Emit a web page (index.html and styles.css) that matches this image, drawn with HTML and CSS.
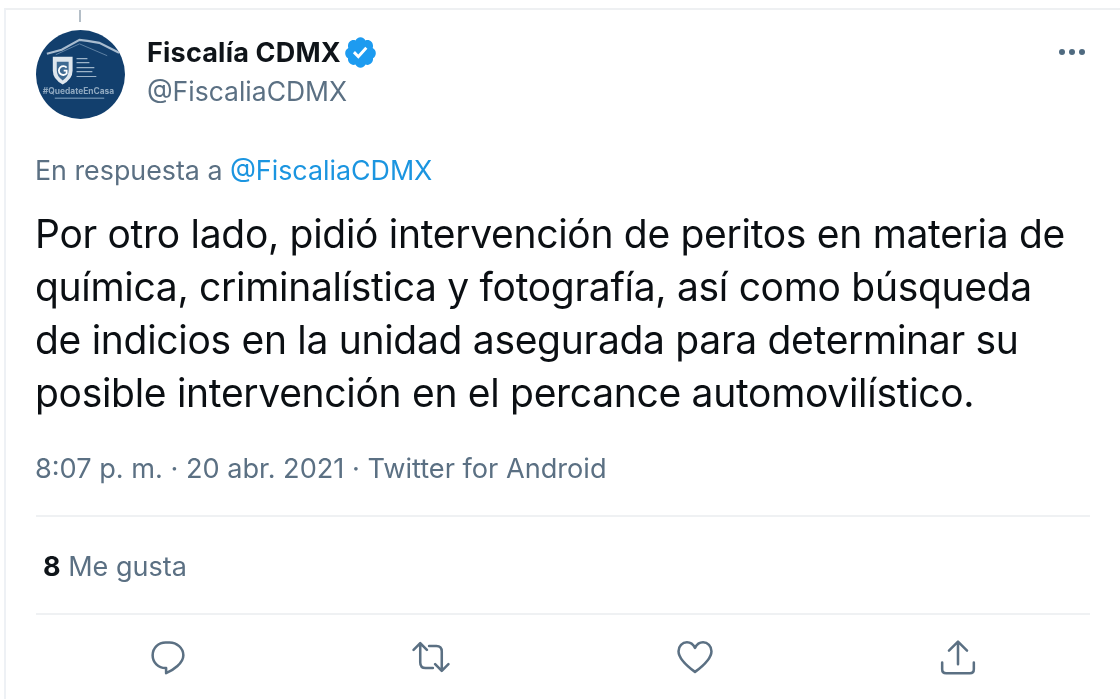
FILE: index.html
```
<!DOCTYPE html>
<html lang="es">
<head>
<meta charset="utf-8">
<title>Fiscalía CDMX</title>
<link rel="stylesheet" href="styles.css">
</head>
<body>
<main class="tweet">
  <div class="thread-line"></div>
  <header class="head">
    <svg class="avatar" viewBox="0 0 90 90" role="img" aria-label="Fiscalía CDMX">
      <circle cx="45" cy="45" r="45" fill="#123f6d"/>
      <path d="M11 24 L26 20 L44 10 L52 11 L64 13 L84 23" fill="none" stroke="#a9bccf" stroke-width="2.200"/>
      <path d="M20 25 L44 14 L72 26" fill="none" stroke="#5f82a4" stroke-width="1"/>
      <path d="M17 27h20v14q0 9-10 14q-10-5-10-14z" fill="#dfe7ee"/>
      <path d="M21 32h12v9q0 6-6 10q-6-4-6-10z" fill="#3f6a92"/>
      <path d="M31 38a4.500 4.500 0 1 0 0 6v-3h-3" fill="none" stroke="#fff" stroke-width="1.800"/>
      <g class="avatar-lines">
        <path d="M41 29h11M41 33h13M41 38h18M41 42h16M41 47h20"/>
      </g>
      <text class="avatar-tag" x="43" y="65" text-anchor="middle">#QuedateEnCasa</text>
      <path d="M19 69h50" stroke="#5f83a6" stroke-width="1.400"/>
    </svg>
    <div class="names">
      <div class="name-row">
        <span class="name">Fiscalía CDMX</span>
        <svg class="badge" viewBox="0 0 24 24" aria-hidden="true"><path fill="#1d9bf0" d="M22.500 12.500c0-1.580-.875-2.950-2.148-3.600.154-.435.238-.905.238-1.400 0-2.210-1.710-3.998-3.818-3.998-.47 0-.92.084-1.336.25C14.818 2.415 13.510 1.500 12 1.500s-2.816.917-3.437 2.250c-.415-.165-.866-.25-1.336-.25-2.110 0-3.818 1.790-3.818 4 0 .494.083.964.237 1.400-1.272.650-2.147 2.018-2.147 3.600 0 1.495.782 2.798 1.942 3.486-.02.170-.032.340-.032.514 0 2.210 1.708 4 3.818 4 .47 0 .92-.086 1.335-.25.620 1.334 1.926 2.250 3.437 2.250 1.512 0 2.818-.916 3.437-2.250.415.163.865.248 1.336.248 2.110 0 3.818-1.790 3.818-4 0-.174-.012-.344-.033-.513 1.158-.687 1.943-1.990 1.943-3.484z"/><path fill="#fff" d="M10.540 16.200 6.800 12.460l1.410-1.410 2.260 2.260 4.800-5.230 1.470 1.350z"/></svg>
      </div>
      <div class="handle">@FiscaliaCDMX</div>
    </div>
    <div class="more" aria-label="Más"><span></span><span></span><span></span></div>
  </header>
  <p class="reply">En respuesta a <a class="mention">@FiscaliaCDMX</a></p>
  <p class="text">Por otro lado, pidió intervención de peritos en materia de<br>química, criminalística y fotografía, así como búsqueda<br>de indicios en la unidad asegurada para determinar su<br>posible intervención en el percance automovilístico.</p>
  <p class="meta">8:07 p. m. · 20 abr. 2021 · Twitter for Android</p>
  <div class="likes"><b>8</b> Me gusta</div>
  <nav class="actions">
    <svg class="icon" viewBox="0 0 24 24"><path d="M12.500 2.800h-2C5.900 2.800 2.300 6.300 2.300 10.900c0 4.500 3.600 8.100 8.100 8.100h.4v3.200c4.600-2 10.900-6.300 10.900-11.300 0-4.600-4.200-8.100-8.700-8.100z"/></svg>
    <svg class="icon" viewBox="0 0 24 24"><path d="M1 7.500 5.200 3.200 9.400 7.500M5.200 3.600V15.500c0 2.200 1.400 3.500 3.400 3.500h4.600M23 16.500l-4.200 4.300-4.200-4.300M18.800 20.400V8.500c0-2.200-1.400-3.500-3.400-3.500h-4.600"/></svg>
    <svg class="icon" viewBox="0 0 24 24"><path d="M12 21.400C7.400 18 1.600 13.400 1.600 8.300c0-3.200 2.400-5.600 5.300-5.600 2.300 0 4 1.300 5.100 3.600 1.100-2.300 2.800-3.600 5.100-3.600 2.900 0 5.300 2.400 5.300 5.600 0 5.100-5.800 9.700-10.400 13.100z"/></svg>
    <svg class="icon" viewBox="0 0 24 24"><path d="M12 16.500V2.500M6.300 8 12 2.300 17.700 8M2 15.500v4.200c0 1.500 1 2.500 2.500 2.500h15c1.500 0 2.500-1 2.500-2.500v-4.200"/></svg>
  </nav>
</main>
</body>
</html>
```
FILE: styles.css
```
html, body {
  margin: 0;
  padding: 0;
  background: #fff;
}
body {
  width: 1120px;
  height: 699px;
  overflow: hidden;
  padding: 8px 0 0 4px;
  box-sizing: border-box;
  font-family: Inter, "Liberation Sans", sans-serif;
  color: #0f1419;
}
.tweet {
  height: 691px;
  border-top: 2px solid #eef0f2;
  border-left: 2px solid #eef1f5;
  padding: 0 30px;
  box-sizing: border-box;
  filter: blur(0.5px);
}
.thread-line {
  width: 2px;
  height: 12px;
  background: #b4bec7;
  margin-left: 43px;
}
.head {
  display: flex;
  align-items: flex-start;
  margin-top: 8px;
}
.avatar {
  width: 89px;
  height: 89px;
  flex: none;
}
.avatar-lines {
  stroke: #9db4c9;
  stroke-width: 1.2;
}
.avatar-tag {
  font-size: 8.500px;
  font-weight: 700;
  fill: #8fa8bf;
}
.names {
  margin-left: 22px;
  flex: 1;
  padding-top: 6px;
}
.name-row {
  display: flex;
  align-items: center;
  gap: 2px;
  height: 32px;
}
.name {
  font-size: 27px;
  font-weight: 700;
  letter-spacing: 0.2px;
}
.badge {
  width: 35px;
  height: 35px;
}
.handle {
  font-size: 26.5px;
  color: #5b7083;
  margin-top: 7px;
}
.more {
  display: flex;
  gap: 4px;
  margin: 19px 5px 0 0;
}
.more span {
  width: 6px;
  height: 6px;
  border-radius: 50%;
  background: #4f6a80;
}
.reply {
  margin: 33px 0 0 -1px;
  font-size: 26.8px;
  line-height: 36px;
  color: #5b7083;
}
.mention {
  color: #1b95e0;
}
.text {
  margin: 19px 0 0 -1px;
  font-size: 39px;
  line-height: 53px;
  letter-spacing: -0.3px;
  color: #0b0f13;
}
.meta {
  margin: 32px 0 0 -1px;
  font-size: 27.15px;
  line-height: 36px;
  color: #5b7083;
}
.likes {
  margin-top: 28px;
  border-top: 2px solid #eff1f3;
  border-bottom: 2px solid #eff1f3;
  height: 96px;
  padding-left: 7px;
  font-size: 27px;
  line-height: 99px;
  color: #5b7083;
}
.likes b {
  color: #0f1419;
}
.actions {
  display: flex;
  justify-content: space-around;
  margin-top: 23px;
}
.icon {
  width: 38px;
  height: 38px;
  fill: none;
  stroke: #5b7083;
  stroke-width: 1.6;
  stroke-linejoin: round;
  stroke-linecap: round;
}
```
